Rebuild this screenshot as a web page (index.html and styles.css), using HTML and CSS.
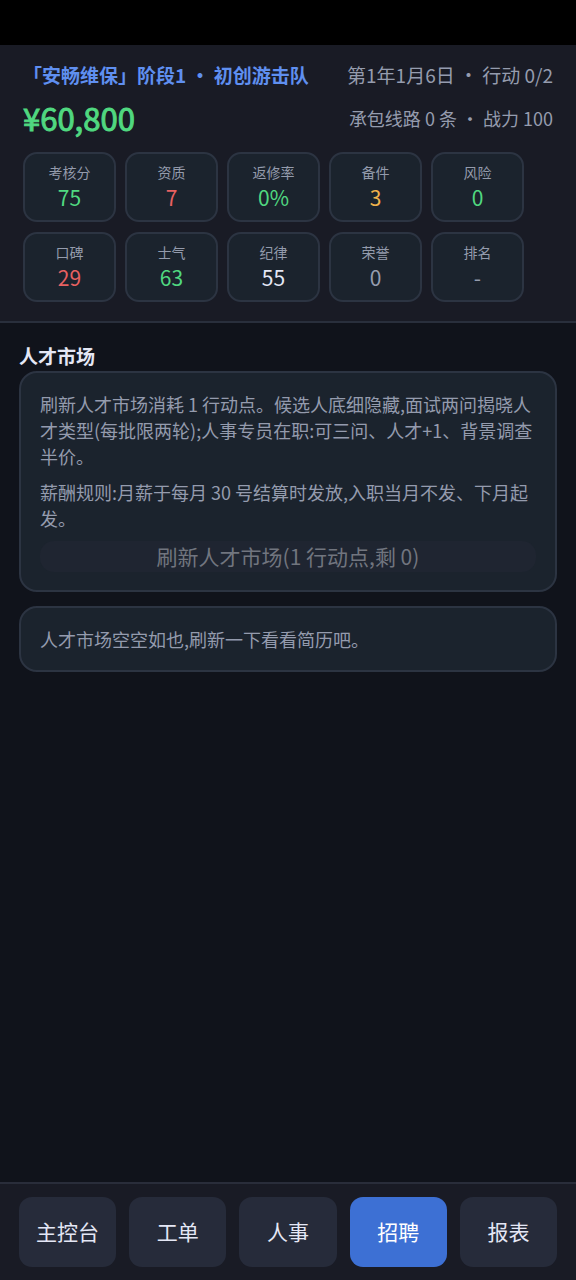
FILE: index.html
```html
<!DOCTYPE html>
<html lang="zh-CN">
<head>
    <meta charset="utf-8">
    <meta name="viewport" content="width=device-width, initial-scale=1">
    <title>人才市场</title>
    <link rel="stylesheet" href="styles.css">
</head>
<body>
    <div class="status-bar"></div>

    <header class="hud">
        <div class="hud-row">
            <span class="company">「安畅维保」阶段1 · 初创游击队</span>
            <span class="date">第1年1月6日 · 行动 0/2</span>
        </div>
        <div class="hud-row hud-money">
            <span class="money">¥60,800</span>
            <span class="lines">承包线路 0 条 · 战力 100</span>
        </div>
        <div class="stats">
            <div class="stat"><span class="label">考核分</span><span class="value good">75</span></div>
            <div class="stat"><span class="label">资质</span><span class="value bad">7</span></div>
            <div class="stat"><span class="label">返修率</span><span class="value good">0%</span></div>
            <div class="stat"><span class="label">备件</span><span class="value warn">3</span></div>
            <div class="stat"><span class="label">风险</span><span class="value good">0</span></div>
            <div class="stat"><span class="label">口碑</span><span class="value bad">29</span></div>
            <div class="stat"><span class="label">士气</span><span class="value good">63</span></div>
            <div class="stat"><span class="label">纪律</span><span class="value">55</span></div>
            <div class="stat"><span class="label">荣誉</span><span class="value muted">0</span></div>
            <div class="stat"><span class="label">排名</span><span class="value muted">-</span></div>
        </div>
    </header>

    <main class="content">
        <h2>人才市场</h2>
        <section class="card">
            <p>刷新人才市场消耗 1 行动点。候选人底细隐藏,面试两问揭晓人才类型(每批限两轮);人事专员在职:可三问、人才+1、背景调查半价。</p>
            <p>薪酬规则:月薪于每月 30 号结算时发放,入职当月不发、下月起发。</p>
            <button class="btn" type="button" disabled>刷新人才市场(1 行动点,剩 0)</button>
        </section>
        <section class="card">
            <p>人才市场空空如也,刷新一下看看简历吧。</p>
        </section>
    </main>

    <nav class="tabs">
        <button class="tab" type="button">主控台</button>
        <button class="tab" type="button">工单</button>
        <button class="tab" type="button">人事</button>
        <button class="tab active" type="button" aria-current="page">招聘</button>
        <button class="tab" type="button">报表</button>
    </nav>
</body>
</html>
```
FILE: styles.css
```css
* {
    box-sizing: border-box;
}

body {
    margin: 0;
    min-height: 100vh;
    display: flex;
    flex-direction: column;
    background-color: #10131b;
    color: #e4e7f5;
    font-family: "Noto Sans CJK SC", sans-serif;
    font-size: 18px;
    line-height: 26px;
}

button {
    border: none;
    font-family: inherit;
    font-size: 21px;
}

.status-bar {
    height: 45px;
    background-color: #000;
}

/* top panel */
.hud {
    padding: 17px 23px 19px;
    background-color: #191b25;
    border-bottom: 2px solid #292f3c;
}

.hud-row {
    display: flex;
    justify-content: space-between;
    align-items: center;
    color: #959cae;
}

.hud-money {
    height: 40px;
    margin: 10px 0 14px;
}

.company {
    color: #5f8ff0;
    font-size: 19px;
    font-weight: bold;
}

.date {
    font-size: 19px;
}

.money {
    color: #50d880;
    font-size: 31px;
    -webkit-text-stroke: 1px #50d880;
}

.stats {
    display: flex;
    flex-wrap: wrap;
    gap: 10px 9px;
}

.stat {
    display: flex;
    flex-direction: column;
    align-items: center;
    width: 93px;
    height: 70px;
    padding-top: 7px;
    background-color: #1b232d;
    border: 2px solid #2c3442;
    border-radius: 14px;
}

.label {
    color: #949bac;
    font-size: 14px;
    line-height: 22px;
}

.value {
    font-size: 21px;
    line-height: 28px;
}

.good {
    color: #50d880;
}

.bad {
    color: #e76161;
}

.warn {
    color: #f0b24b;
}

.muted {
    color: #959cae;
}

/* page content */
.content {
    flex: 1;
    padding: 20px 19px;
}

h2 {
    margin: 0 0 2px;
    font-size: 19px;
    line-height: 26px;
}

.card {
    margin-bottom: 14px;
    padding: 18px 19px;
    background-color: #1b232d;
    border: 2px solid #2c3442;
    border-radius: 18px;
}

.card p {
    margin: 0 0 10px;
    color: #949bad;
}

.card p:last-child {
    margin-bottom: 0;
}

.btn {
    display: block;
    width: 100%;
    padding: 0;
    line-height: 31px;
    background-color: #1f2531;
    border-radius: 14px;
    color: #71757f;
}

/* bottom tabs */
.tabs {
    display: flex;
    gap: 13px;
    padding: 13px 19px;
    background-color: #191b25;
    border-top: 2px solid #292d3a;
}

.tab {
    flex: 1;
    height: 70px;
    padding: 0 0 2px;
    background-color: #262b3a;
    border-radius: 13px;
    color: #e4e7f5;
    cursor: pointer;
}

.tab.active {
    background-color: #3d70d4;
    color: #fff;
}
```
